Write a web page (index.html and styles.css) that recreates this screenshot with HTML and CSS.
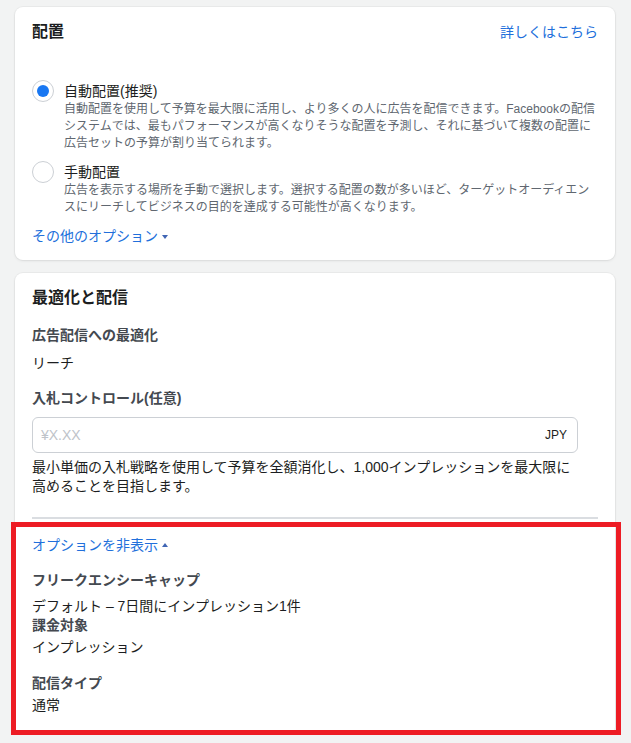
FILE: index.html
```html
<!DOCTYPE html>
<html lang="ja">
<head>
    <meta charset="UTF-8">
    <meta name="viewport" content="width=device-width, initial-scale=1.0">
    <title>配置と配信</title>
    <link rel="stylesheet" href="styles.css">
</head>
<body>
    <div class="page">
        <section class="card placement">
            <div class="card-header">
                <h2 class="card-title">配置</h2>
                <a class="link" href="#">詳しくはこちら</a>
            </div>

            <div class="radio-group">
                <label class="option">
                    <span class="radio is-checked"></span>
                    <span class="option-body">
                        <span class="option-label">自動配置(推奨)</span>
                        <span class="option-desc">自動配置を使用して予算を最大限に活用し、より多くの人に広告を配信できます。Facebookの配信システムでは、最もパフォーマンスが高くなりそうな配置を予測し、それに基づいて複数の配置に広告セットの予算が割り当てられます。</span>
                    </span>
                </label>
                <label class="option">
                    <span class="radio"></span>
                    <span class="option-body">
                        <span class="option-label">手動配置</span>
                        <span class="option-desc">広告を表示する場所を手動で選択します。選択する配置の数が多いほど、ターゲットオーディエンスにリーチしてビジネスの目的を達成する可能性が高くなります。</span>
                    </span>
                </label>
            </div>

            <a class="link toggle" href="#">その他のオプション<span class="caret caret-down"></span></a>
        </section>

        <section class="card delivery">
            <h2 class="card-title">最適化と配信</h2>

            <div class="field-label first">広告配信への最適化</div>
            <div class="field-value reach">リーチ</div>

            <div class="field-label bid-label">入札コントロール(任意)</div>
            <div class="bid-group">
                <div class="input">
                    <span class="placeholder">¥X.XX</span>
                    <span class="currency">JPY</span>
                </div>
                <p class="bid-desc">最小単価の入札戦略を使用して予算を全額消化し、1,000インプレッションを最大限に高めることを目指します。</p>
            </div>

            <hr class="divider">

            <div class="more-options">
                <a class="link toggle" href="#">オプションを非表示<span class="caret caret-up"></span></a>

                <div class="field-label freq-label">フリークエンシーキャップ</div>
                <div class="field-value freq-value">デフォルト – 7日間にインプレッション1件</div>

                <div class="field-label billing-label">課金対象</div>
                <div class="field-value small-gap">インプレッション</div>

                <div class="field-label type-label">配信タイプ</div>
                <div class="field-value small-gap">通常</div>
            </div>
        </section>
    </div>
</body>
</html>
```

FILE: styles.css
```css
/* Page */
body {
    margin: 0;
    background: #f2f3f3;
    font-family: 'Liberation Sans', 'Noto Sans CJK JP', sans-serif;
    font-size: 14px;
    color: #1c1e21;
}

.page {
    padding: 7px 16px 0 15px;
}

.card {
    background: #fff;
    border-radius: 8px;
    box-shadow: 0 0 0 1px rgba(0, 0, 0, 0.03), 0 1px 3px rgba(0, 0, 0, 0.08);
    padding: 16px 17px 14px 17px;
}

.card + .card {
    margin-top: 13px;
}

.delivery {
    padding-bottom: 20px;
}

.card-header {
    display: flex;
    justify-content: space-between;
    align-items: center;
}

.card-title {
    margin: 0;
    font-size: 16px;
    line-height: 18px;
    font-weight: bold;
    color: #1c1e21;
}

.link {
    color: #216fdb;
    text-decoration: none;
    font-size: 14px;
    line-height: 18px;
}

/* Radio options */
.radio-group {
    margin-top: 40px;
}

.option {
    display: flex;
    gap: 10px;
    cursor: pointer;
}

.option + .option {
    margin-top: 10px;
}

.radio {
    flex: none;
    box-sizing: border-box;
    width: 22px;
    height: 22px;
    margin-top: -1px;
    border: 1px solid #ccd0d5;
    border-radius: 50%;
    background: #fff;
    display: flex;
    align-items: center;
    justify-content: center;
}

.radio.is-checked::after {
    content: '';
    width: 12px;
    height: 12px;
    border-radius: 50%;
    background: #1877f2;
}

.option-body {
    display: flex;
    flex-direction: column;
    min-width: 0;
}

.option-label {
    font-size: 14px;
    line-height: 20px;
    color: #1c1e21;
}

.option-desc {
    font-size: 12px;
    line-height: 17px;
    color: #606770;
}

.toggle {
    display: inline-flex;
    align-items: center;
    line-height: 20px;
    margin-top: 10px;
}

.caret {
    display: inline-block;
    margin-left: 4px;
    width: 0;
    height: 0;
    border-left: 3px solid transparent;
    border-right: 3px solid transparent;
}

.caret-down {
    border-top: 4px solid #4065b4;
    margin-top: 2px;
}

.caret-up {
    border-bottom: 4px solid #4065b4;
    margin-top: -1px;
}

/* Delivery card */
.field-label {
    font-weight: bold;
    line-height: 20px;
    color: #444950;
}

.field-value {
    line-height: 20px;
    color: #1c1e21;
}

.field-label.first {
    margin-top: 18px;
}

.reach {
    margin-top: 8px;
}

.bid-label {
    margin-top: 15px;
}

.bid-group {
    max-width: 546px;
}

.input {
    box-sizing: border-box;
    height: 36px;
    margin-top: 9px;
    border: 1px solid #ccd0d5;
    border-radius: 6px;
    display: flex;
    align-items: center;
    justify-content: space-between;
    padding: 0 10px 0 8px;
}

.placeholder {
    color: #bec3c9;
    font-size: 14px;
}

.currency {
    font-size: 12px;
    color: #1c1e21;
}

.bid-desc {
    margin: 5px 0 0;
    line-height: 19px;
    color: #1c1e21;
}

.divider {
    margin: 21px 0 0;
    border: none;
    height: 2px;
    background: #dadde1;
}

/* Highlighted section */
.more-options {
    position: relative;
    padding-top: 16px;
}

.more-options .toggle {
    margin-top: 0;
}

.more-options::after {
    content: '';
    position: absolute;
    left: -21px;
    right: -23px;
    top: 3px;
    bottom: -20px;
    border: 5px solid #ed1c24;
    pointer-events: none;
}

.freq-label {
    margin-top: 15px;
}

.freq-value {
    margin-top: 6px;
}

.billing-label {
    margin-top: -1px;
}

.small-gap {
    margin-top: 2px;
}

.type-label {
    margin-top: 16px;
}
```
